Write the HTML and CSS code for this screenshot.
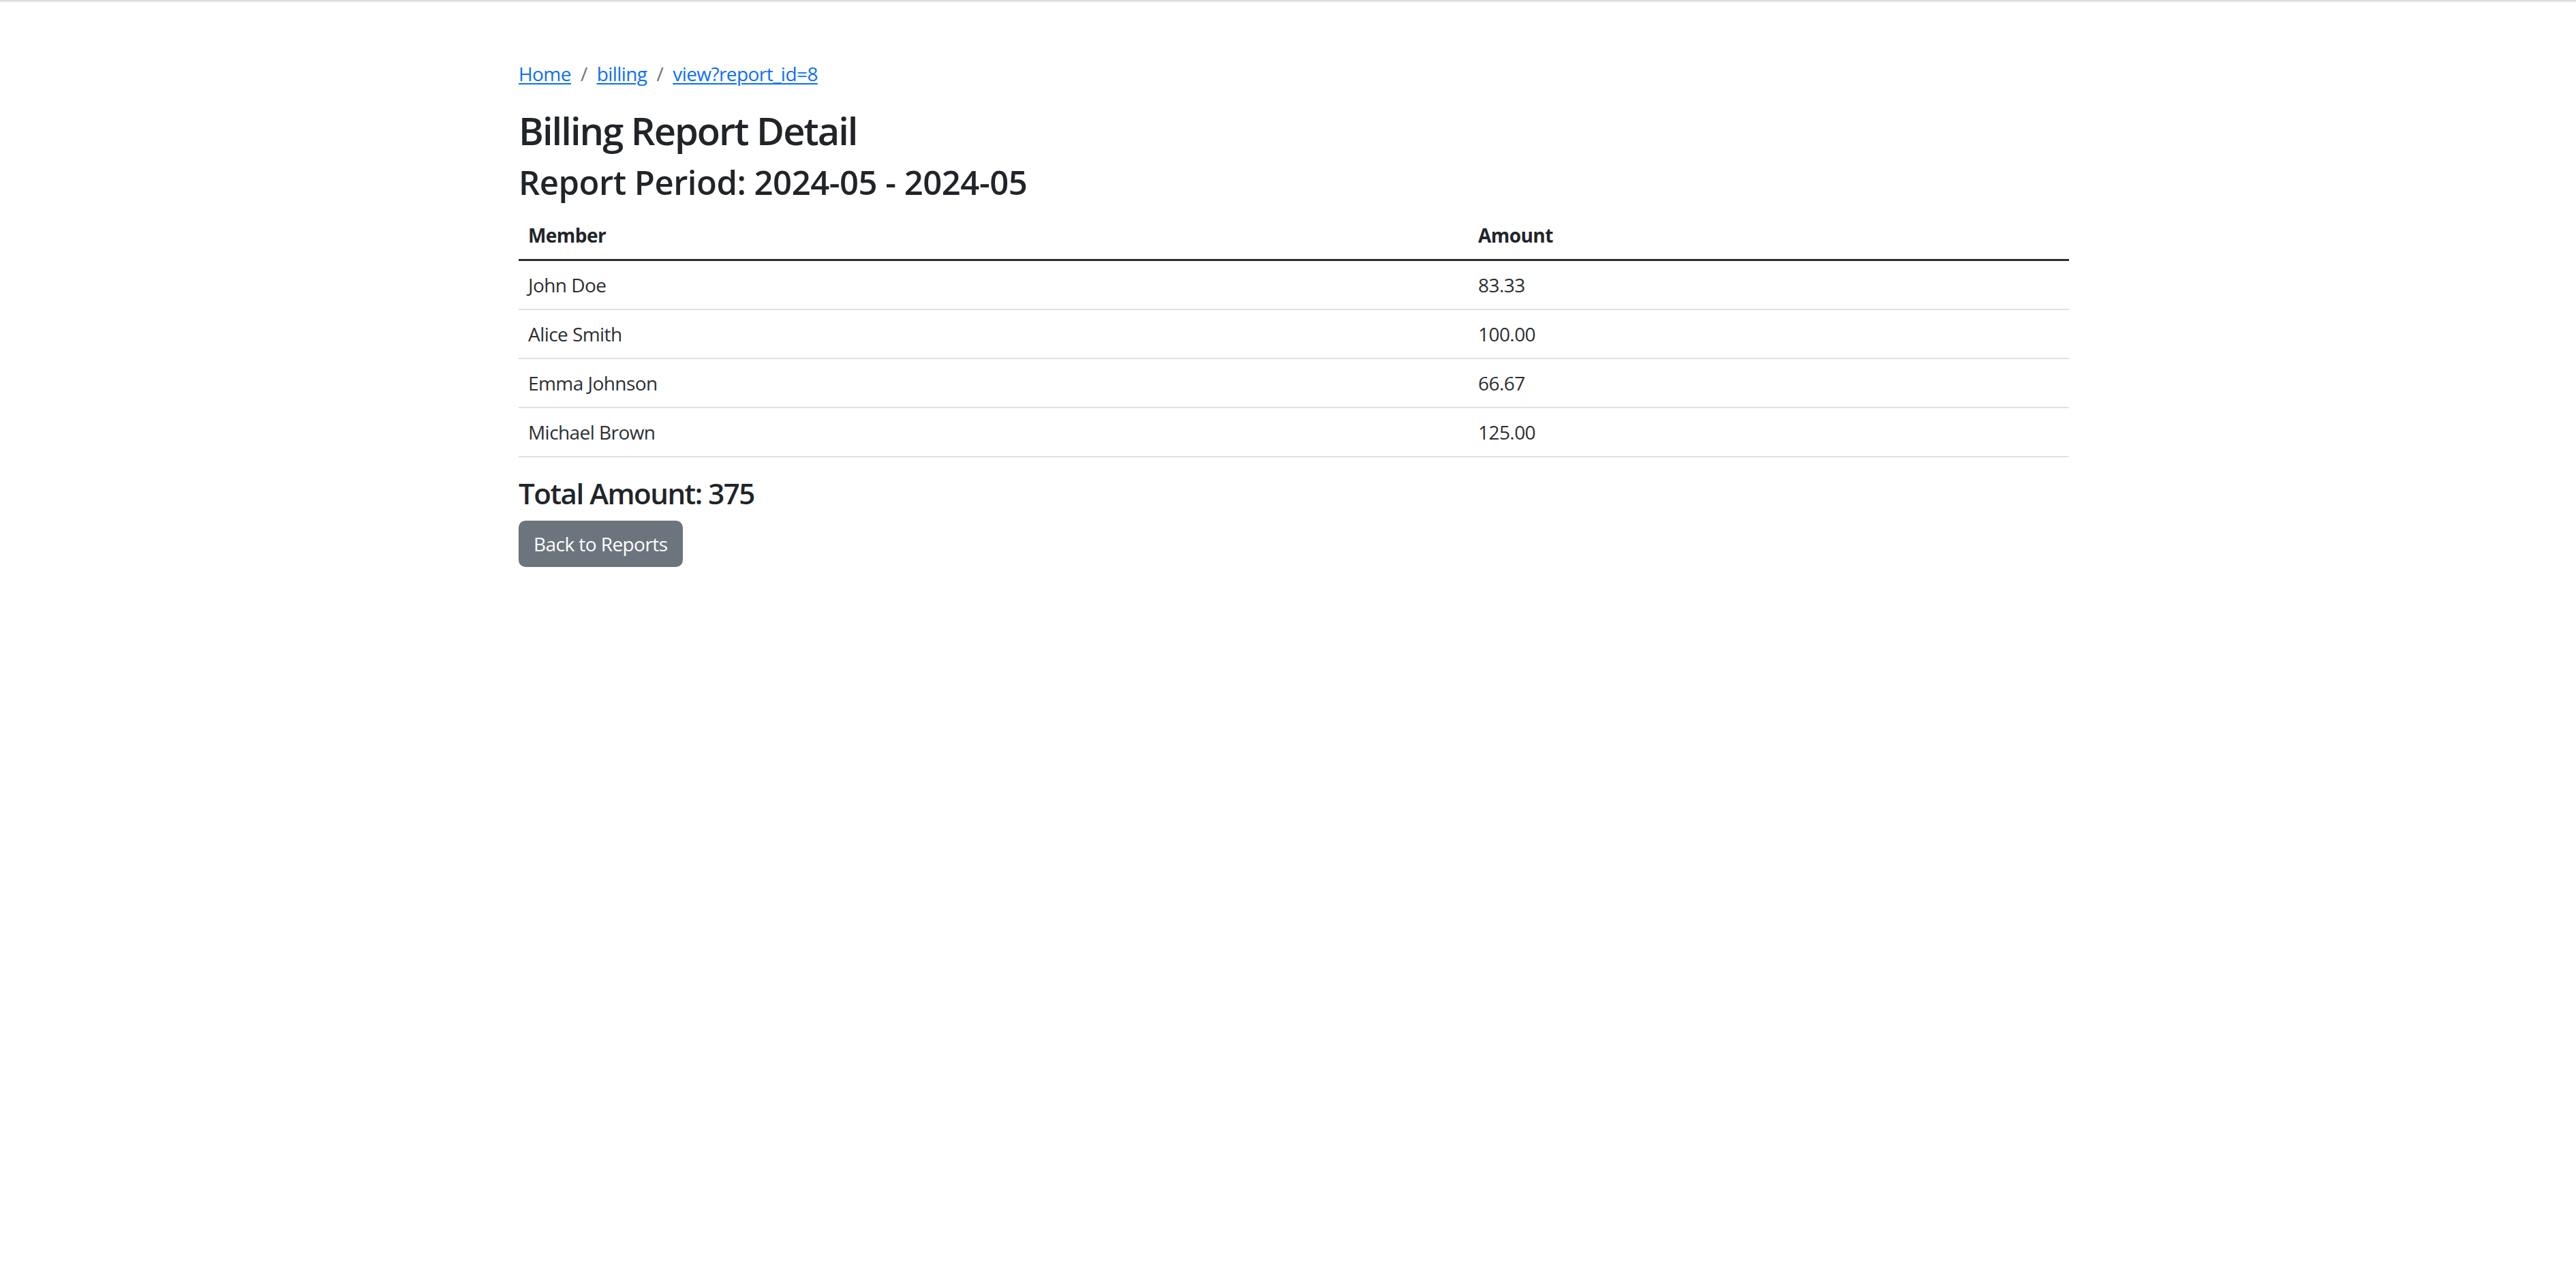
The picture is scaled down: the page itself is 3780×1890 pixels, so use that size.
FILE: index.html
```html
<!DOCTYPE html>
<html lang="en">
<head>
<meta charset="utf-8">
<title>Billing Report Detail</title>
<link rel="stylesheet" href="styles.css">
</head>
<body>
<div class="topbar"></div>
<div class="container">
  <nav aria-label="breadcrumb">
    <ol class="breadcrumb">
      <li class="breadcrumb-item"><a href="#">Home</a></li>
      <li class="breadcrumb-item"><a href="#">billing</a></li>
      <li class="breadcrumb-item"><a href="#">view?report_id=8</a></li>
    </ol>
  </nav>
  <h2 class="page-title">Billing Report Detail</h2>
  <h3 class="period">Report Period: 2024-05 - 2024-05</h3>
  <table class="table">
    <colgroup>
      <col class="col-member">
      <col class="col-amount">
    </colgroup>
    <thead>
      <tr><th>Member</th><th>Amount</th></tr>
    </thead>
    <tbody>
      <tr><td>John Doe</td><td>83.33</td></tr>
      <tr><td>Alice Smith</td><td>100.00</td></tr>
      <tr><td>Emma Johnson</td><td>66.67</td></tr>
      <tr><td>Michael Brown</td><td>125.00</td></tr>
    </tbody>
  </table>
  <h4 class="total">Total Amount: 375</h4>
  <a href="#" class="btn btn-secondary">Back to Reports</a>
</div>
</body>
</html>
```
FILE: styles.css
```css
html, body {
  margin: 0;
  padding: 0;
  background: #ffffff;
}

body {
  font-family: "Open Sans", "Noto Sans", "Liberation Sans", sans-serif;
  font-size: 28px;
  line-height: 42px;
  color: #212529;
  letter-spacing: -0.02em;
}

.topbar {
  height: 3px;
  background: linear-gradient(#d6d6d6, #ececec);
}

.container {
  width: 2275px;
  margin-left: 761px;
  padding-top: 84px;
}

.breadcrumb {
  display: flex;
  list-style: none;
  margin: 0 0 29px 0;
  padding: 0;
}

.breadcrumb-item + .breadcrumb-item {
  padding-left: 14px;
}

.breadcrumb-item + .breadcrumb-item::before {
  content: "/";
  color: #6c757d;
  padding-right: 14px;
}

.breadcrumb a {
  color: #0d6efd;
  text-decoration: underline;
  text-decoration-thickness: 2px;
  text-underline-offset: 3px;
}

.page-title,
.period,
.total {
  font-weight: 600;
  letter-spacing: -0.035em;
  color: #212529;
}

.page-title {
  font-size: 56px;
  line-height: 67px;
  margin: 0 0 13px 0;
}

.period {
  font-size: 49px;
  line-height: 59px;
  letter-spacing: -0.01em;
  margin: 0 0 13px 0;
}

.table {
  width: 2275px;
  border-collapse: collapse;
  margin: 0 0 28px 0;
  table-layout: fixed;
}

.col-member {
  width: 1394px;
}

.table th,
.table td {
  padding: 14px;
  text-align: left;
  vertical-align: top;
}

.table th {
  font-weight: 700;
  border-bottom: 3px solid #2b2f33;
}

.table td {
  border-bottom: 2px solid #dee2e6;
  color: #2b2f33;
}

.total {
  font-size: 42px;
  line-height: 50px;
  margin: 0 0 15px 0;
}

.btn {
  display: inline-block;
  font-size: 28px;
  line-height: 42px;
  padding: 11px 20px;
  border: 2px solid #6c757d;
  border-radius: 10px;
  text-decoration: none;
}

.btn-secondary {
  background: #6c757d;
  color: #ffffff;
}
```
